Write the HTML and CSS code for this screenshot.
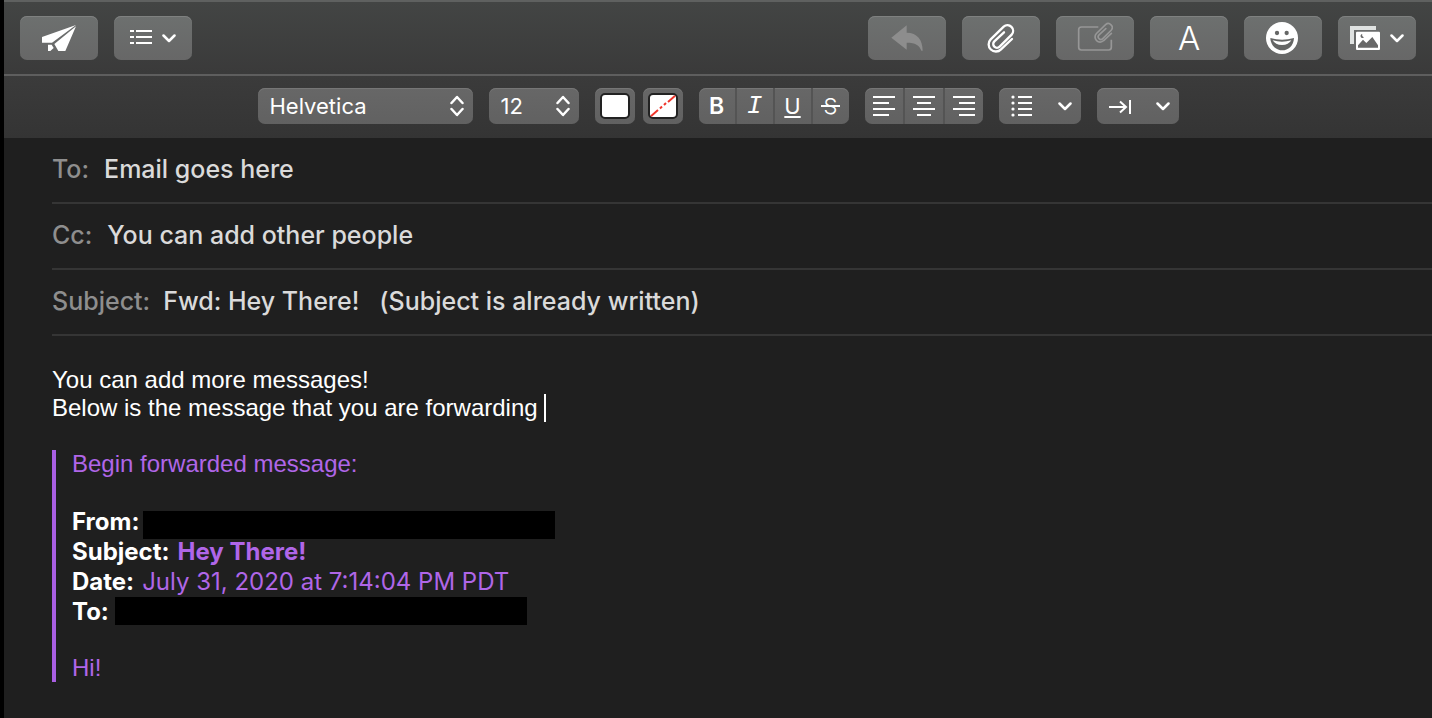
FILE: index.html
```html
<!DOCTYPE html>
<html lang="en">
<head>
<meta charset="utf-8">
<title>Fwd: Hey There!</title>
<link rel="stylesheet" href="styles.css">
</head>
<body>
<svg class="defs" aria-hidden="true">
  <symbol id="chevron" viewBox="0 0 14 9"><path d="M1.500 1.500 7 7 12.500 1.500" class="line heavy"/></symbol>
  <symbol id="updown" viewBox="0 0 14 22"><path d="M1.500 8 7 2 12.500 8M1.500 14 7 20 12.500 14" class="line heavy"/></symbol>
</svg>
<main class="window">
  <header class="toolbar">
    <button class="tool" aria-label="Send">
      <svg width="34" height="26" viewBox="126 72 102 78" fill="currentColor"><path d="M228 72 126 108v17h30zM228 76l-32 74h-21l-12-21zM144 131h11l6 10-10 9h-7z"/></svg>
    </button>
    <button class="tool" aria-label="Header fields">
      <svg width="24" height="16" viewBox="0 0 24 16" fill="currentColor"><path d="M0 0h4v2H0zM6 0h16v2H6zM0 6h4v2H0zM6 6h16v2H6zM0 12h4v2H0zM6 12h16v2H6z"/></svg>
      <svg width="14" height="9"><use href="#chevron"/></svg>
    </button>
    <div class="spacer"></div>
    <button class="tool dim" aria-label="Reply">
      <svg width="32" height="26" viewBox="121 70 96 78" fill="currentColor"><path d="M122 108 168 71v22c32 0 48 22 48 54h-4c-7-17-17-24-44-24v21z"/></svg>
    </button>
    <button class="tool" aria-label="Attach file">
      <svg width="28" height="30" viewBox="411 69 84 90"><path id="clip" d="M486 117 453 148A21.500 21.500 0 0 1 422 118L461 80A17 17 0 0 1 485 104L449 140A11 11 0 0 1 433 124L462 97" fill="none" stroke="currentColor" stroke-width="7" stroke-linecap="round"/></svg>
    </button>
    <button class="tool dim bright" aria-label="Include attachments">
      <svg width="36" height="32" viewBox="681 65 108 96"><path d="M745 80H694q-8 0-8 8v53q0 8 8 8h82q8 0 8-8V118" fill="none" stroke="currentColor" stroke-width="5"/><use href="#clip" transform="translate(444 17) scale(.7)"/></svg>
    </button>
    <button class="tool letter" aria-label="Format">A</button>
    <button class="tool" aria-label="Emoji">
      <svg width="34" height="32" viewBox="378 66 102 96"><circle cx="426" cy="114" r="48" fill="#fff"/><g fill="#656665"><circle cx="411" cy="99" r="6.500"/><circle cx="440" cy="99" r="6.500"/><path d="M391 114q35 11 71 0c-1 24-18 37-35 37s-35-13-36-37z"/></g><path d="M398 121q28 8 56 0-8 14-28 14t-28-14z" fill="#fff"/></svg>
    </button>
    <button class="tool" aria-label="Photos">
      <svg width="32" height="24" viewBox="630 78 96 72"><path d="M630 78h78v12h-66v42h-12z" fill="#dfe2e1"/><rect x="648" y="95" width="72" height="55" rx="3" fill="#fff"/><path d="M654 143v-7l15-17 10 10 18-18 17 25v7z" fill="#686868"/><path d="M667 102a6 6 0 1 0 5 10 7 7 0 0 1-5-10z" fill="#686868"/></svg>
      <svg width="14" height="9"><use href="#chevron"/></svg>
    </button>
  </header>

  <div class="formatbar">
    <label class="pick family"><select aria-label="Font"><option>Helvetica</option></select><svg width="14" height="22"><use href="#updown"/></svg></label>
    <label class="pick size"><select aria-label="Font size"><option>12</option></select><svg width="14" height="22"><use href="#updown"/></svg></label>
    <div class="swatches">
      <button class="swatch" aria-label="Text color"><span class="chip"></span></button>
      <button class="swatch" aria-label="Background color"><span class="chip"><svg width="26" height="22" viewBox="0 0 26 22"><path d="M0 22 8 15M10 13.500l2-2M14 10l2-2M18 7l8-7" stroke="#f0352b" stroke-width="2" fill="none"/></svg></span></button>
    </div>
    <div class="group styles">
      <button class="bold" aria-label="Bold">B</button>
      <button class="italic" aria-label="Italic">I</button>
      <button class="under" aria-label="Underline">U</button>
      <button class="strike" aria-label="Strikethrough"><span>S</span></button>
    </div>
    <div class="group aligns">
      <button aria-label="Align left"><svg width="22" height="20" viewBox="0 0 22 20" fill="currentColor"><path d="M0 0h22v2H0zM0 6h16v2H0zM0 12h22v2H0zM0 18h16v2H0z"/></svg></button>
      <button aria-label="Align center"><svg width="22" height="20" viewBox="0 0 22 20" fill="currentColor"><path d="M0 0h22v2H0zM4 6h14v2H4zM0 12h22v2H0zM4 18h14v2H4z"/></svg></button>
      <button aria-label="Align right"><svg width="22" height="20" viewBox="0 0 22 20" fill="currentColor"><path d="M0 0h22v2H0zM6 6h16v2H6zM0 12h22v2H0zM6 18h16v2H6z"/></svg></button>
    </div>
    <button class="menu" aria-label="Lists">
      <svg width="22" height="22" viewBox="0 0 22 22" fill="currentColor"><path d="M7 1h14v2H7zM7 7h14v2H7zM7 13h14v2H7zM7 19h14v2H7z"/><circle cx="2" cy="2" r="1.600"/><circle cx="2" cy="8" r="1.600"/><circle cx="2" cy="14" r="1.600"/><circle cx="2" cy="20" r="1.600"/></svg>
      <svg width="14" height="9"><use href="#chevron"/></svg>
    </button>
    <button class="menu" aria-label="Indentation">
      <svg width="22" height="16" viewBox="0 0 22 16"><path d="M0 9h17M11 3.500 17 9l-6 5.500M21 2v14" class="line"/></svg>
      <svg width="14" height="9"><use href="#chevron"/></svg>
    </button>
  </div>

  <section class="compose">
    <div class="field"><label for="to">To:</label><input id="to" type="text" value="Email goes here"></div>
    <div class="field"><label for="cc">Cc:</label><input id="cc" type="text" value="You can add other people"></div>
    <div class="field subject"><label for="subject">Subject:</label><input id="subject" type="text" value="Fwd: Hey There!   (Subject is already written)"></div>

    <div class="message">
      <p>You can add more messages!</p>
      <p>Below is the message that you are forwarding <span class="caret"></span></p>
      <blockquote class="quote">
        <p>Begin forwarded message:</p>
        <div class="meta">
          <div class="row from"><b>From:</b><span class="redacted"></span></div>
          <div class="row"><b>Subject:</b><strong>Hey There!</strong></div>
          <div class="row"><b>Date:</b><span>July 31, 2020 at 7:14:04 PM PDT</span></div>
          <div class="row to"><b>To:</b><span class="redacted"></span></div>
        </div>
        <p>Hi!</p>
      </blockquote>
    </div>
  </section>
</main>
</body>
</html>
```
FILE: styles.css
```css
* { box-sizing: border-box; }
body {
  margin: 0;
  background: #1f1f1f;
  font-family: Inter, "Liberation Sans", sans-serif;
  color: #fff;
}
button, select, input {
  margin: 0;
  padding: 0;
  border: 0;
  color: inherit;
  font: inherit;
  appearance: none;
}
p, blockquote { margin: 0; }
svg { display: block; flex: none; }
.defs { position: absolute; width: 0; height: 0; }
.line { fill: none; stroke: currentColor; stroke-width: 2; }
.heavy { stroke-width: 2.5; stroke-linecap: round; stroke-linejoin: round; }

.window { min-height: 100vh; border-left: 4px solid #000; }

.toolbar {
  display: flex;
  gap: 16px;
  padding: 14px 16px;
  border-top: 2px solid #5f6160;
  border-bottom: 2px solid #5e5e5e;
  background: linear-gradient(#434544, #3a3a3a);
}
.spacer { flex: 1; }
.tool {
  display: flex;
  align-items: center;
  justify-content: center;
  gap: 8px;
  width: 78px;
  height: 44px;
  border-radius: 7px;
  background: linear-gradient(#6d706f, #676767);
  box-shadow: inset 0 1px #7f8180;
}
.dim { color: #8d8d8d; }
.bright { color: #979797; }
.letter { font-size: 33px; font-weight: 300; line-height: 44px; }

.formatbar {
  display: flex;
  justify-content: center;
  gap: 16px;
  padding: 12px 0 14px;
  background: linear-gradient(#3b3b3b, #343434);
}
.pick, .swatch, .group, .menu {
  height: 36px;
  border-radius: 7px;
  background: linear-gradient(#676767, #616161);
  box-shadow: inset 0 1px #767676;
}
.pick { display: grid; align-items: center; font-size: 22px; }
.pick select, .pick svg { grid-area: 1 / 1; }
.pick select { height: 36px; padding-left: 12px; background: none; }
.pick svg { justify-self: end; margin-right: 9px; pointer-events: none; }
.family { width: 215px; }
.size { width: 90px; }
.swatches { display: flex; gap: 8px; }
.swatch { display: grid; place-items: center; width: 40px; }
.chip {
  width: 30px;
  height: 26px;
  overflow: hidden;
  border: 2px solid #222;
  border-radius: 5px;
  background: #fff;
}
.group { display: flex; overflow: hidden; }
.group button {
  display: grid;
  place-items: center;
  flex: 1;
  background: none;
  font-size: 22px;
  line-height: 34px;
}
.group button + button { border-left: 2px solid #545454; }
.styles { width: 150px; }
.aligns { width: 118px; }
.group .bold { font-size: 23px; font-weight: 600; }
.group .italic { font-family: "Liberation Mono", monospace; font-style: italic; font-size: 26px; }
.group .under { text-decoration: underline 2px; text-underline-offset: 2px; }
.group .strike { font-weight: 300; }
.strike span {
  padding: 0 3px;
  background: linear-gradient(#fff, #fff) center / 100% 2px no-repeat;
}
.menu {
  display: flex;
  align-items: center;
  justify-content: space-between;
  width: 82px;
  padding: 0 9px 0 12px;
}

.field {
  display: flex;
  align-items: center;
  gap: 15px;
  height: 66px;
  margin-left: 48px;
  padding-bottom: 2px;
  border-bottom: 2px solid #353535;
  font-size: 25px;
  font-weight: 500;
  font-variant-ligatures: none;
}
.subject { gap: 13px; }
.field label { color: #8e8e8e; }
.field input { flex: 1; min-width: 0; background: none; color: #dadada; outline: 0; }

.message {
  padding: 30px 48px;
  font: 24px/28px "Liberation Sans", Arial, sans-serif;
}
.caret { display: inline-block; width: 2px; height: 28px; background: #fff; vertical-align: bottom; }
.quote {
  margin-top: 28px;
  padding-left: 16px;
  border-left: 4px solid #a95fe3;
  color: #b066e8;
}
.meta { margin: 28px 0; font-family: Inter, sans-serif; font-size: 24px; line-height: 32px; }
.row { display: flex; gap: 8px; height: 30px; }
.row b { color: #fff; }
.redacted { width: 412px; height: 28px; margin-top: 1px; background: #000; }
.from { gap: 4px; }
.from .redacted { margin-top: 5px; }
.to { gap: 6px; }
```
